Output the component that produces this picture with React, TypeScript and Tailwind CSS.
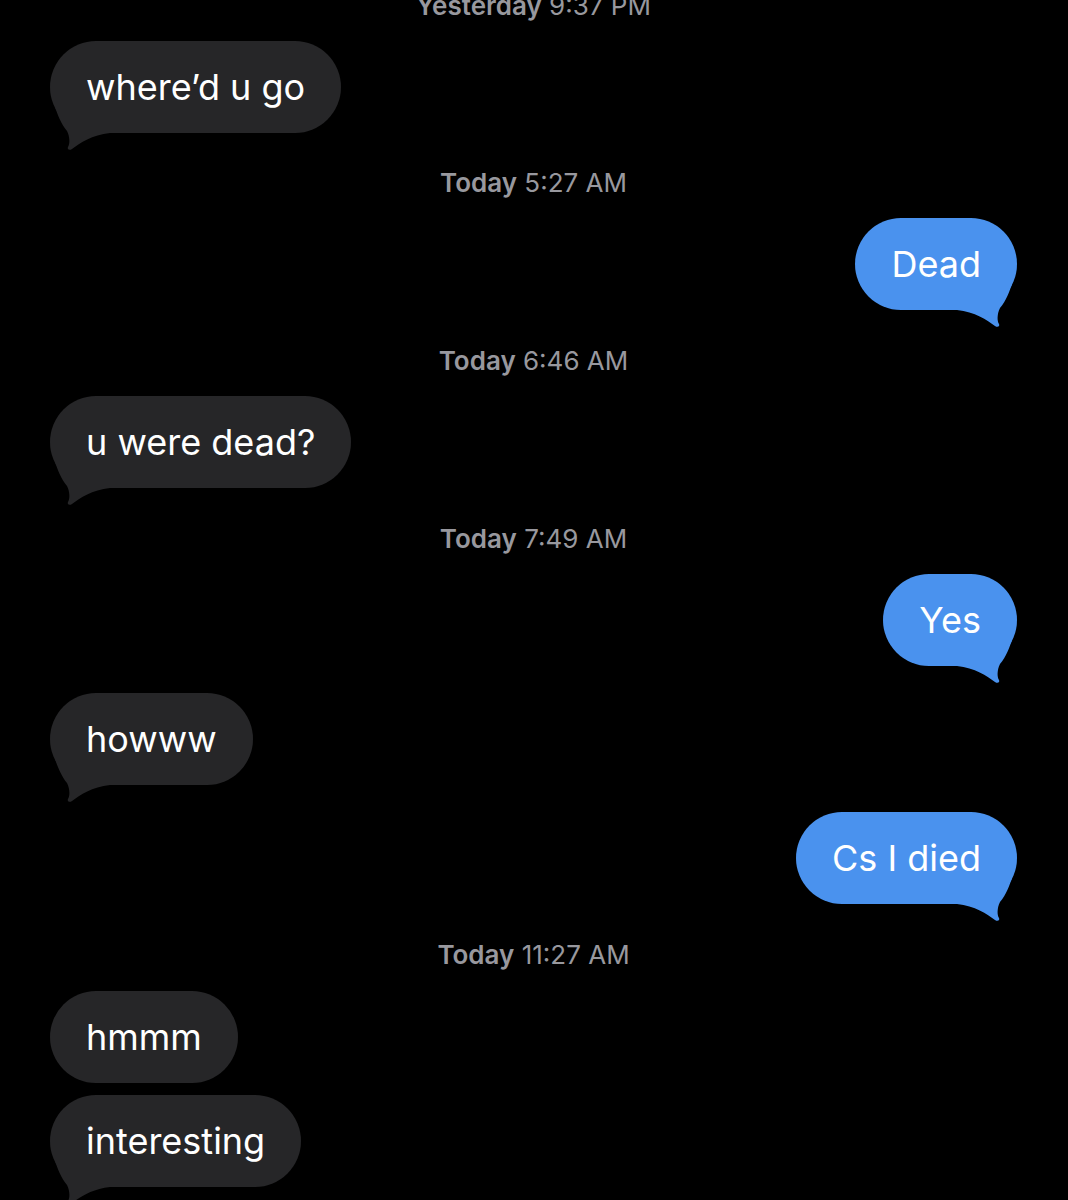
type Msg =
  | { kind: "time"; day: string; time: string; mt: number }
  | { kind: "in" | "out"; text: string; mt: number; tail?: boolean };

const messages: Msg[] = [
  { kind: "time", day: "Yesterday", time: "9:37 PM", mt: -9 },
  { kind: "in", text: "where’d u go", mt: 20, tail: true },
  { kind: "time", day: "Today", time: "5:27 AM", mt: 35 },
  { kind: "out", text: "Dead", mt: 20, tail: true },
  { kind: "time", day: "Today", time: "6:46 AM", mt: 36 },
  { kind: "in", text: "u were dead?", mt: 20, tail: true },
  { kind: "time", day: "Today", time: "7:49 AM", mt: 36 },
  { kind: "out", text: "Yes", mt: 20, tail: true },
  { kind: "in", text: "howww", mt: 27, tail: true },
  { kind: "out", text: "Cs I died", mt: 27, tail: true },
  { kind: "time", day: "Today", time: "11:27 AM", mt: 36 },
  { kind: "in", text: "hmmm", mt: 21 },
  { kind: "in", text: "interesting", mt: 12, tail: true },
];

function Tail({ color, flip }: { color: string; flip?: boolean }) {
  return (
    <svg
      width="60"
      height="46"
      viewBox="0 0 60 46"
      className={
        flip
          ? "absolute left-0 bottom-[-20px] -scale-x-100"
          : "absolute right-0 bottom-[-20px]"
      }
    >
      <path
        d="M55 0 C53 6 49 17 43 24 C40 30 40 37 42 40 C43 42 41 44 38 42 C30 36 18 28 0 26 L0 0 Z"
        fill={color}
      />
    </svg>
  );
}

function Bubble({ text, out, tail }: { text: string; out: boolean; tail?: boolean }) {
  const color = out ? "#4a92ee" : "#262628";
  return (
    <div className={out ? "flex justify-end" : "flex justify-start"}>
      <div
        className={
          "relative h-[92px] flex items-center px-9 rounded-[46px] text-white text-[36px] " +
          (out ? "bg-[#4a92ee]" : "bg-[#262628]")
        }
      >
        {tail && <Tail color={color} flip={!out} />}
        <span className="relative leading-none pb-[1px]">{text}</span>
      </div>
    </div>
  );
}

export default function App() {
  return (
    <div
      className="min-h-[1200px] bg-black overflow-hidden pl-[50px] pr-[51px]"
      style={{ fontFamily: "Inter, 'Noto Sans', sans-serif" }}
    >
      {messages.map((m, i) =>
        m.kind === "time" ? (
          <div
            key={i}
            className="h-[30px] leading-[30px] text-center text-[26px] text-[#98989e]"
            style={{ marginTop: m.mt }}
          >
            <span className="font-semibold">{m.day}</span> {m.time}
          </div>
        ) : (
          <div key={i} style={{ marginTop: m.mt }}>
            <Bubble text={m.text} out={m.kind === "out"} tail={m.tail} />
          </div>
        )
      )}
    </div>
  );
}
